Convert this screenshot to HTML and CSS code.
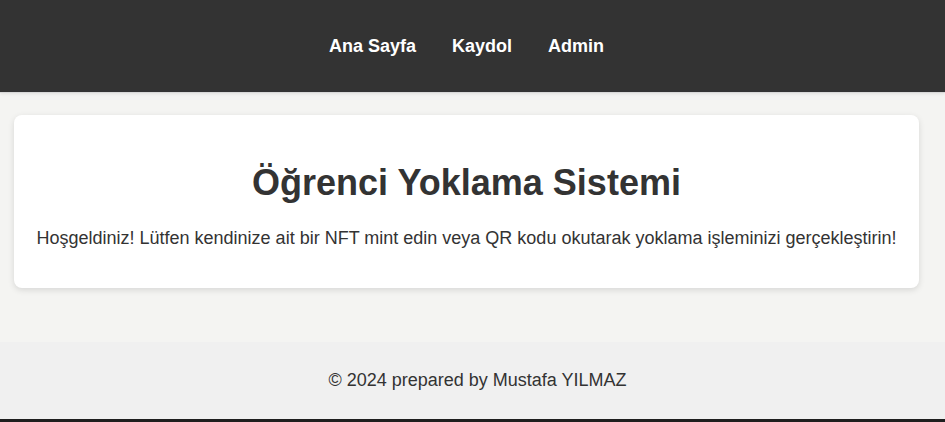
FILE: index.html
```html
<!DOCTYPE html>
<html lang="tr">
<head>
<meta charset="utf-8">
<title>Öğrenci Yoklama Sistemi</title>
<link rel="stylesheet" href="styles.css">
</head>
<body>
<header class="site-header">
  <nav class="nav">
    <a href="#" class="nav-link">Ana Sayfa</a>
    <a href="#" class="nav-link">Kaydol</a>
    <a href="#" class="nav-link">Admin</a>
  </nav>
</header>
<main class="main">
  <section class="card">
    <h1 class="title">Öğrenci Yoklama Sistemi</h1>
    <p class="lead">Hoşgeldiniz! Lütfen kendinize ait bir NFT mint edin veya QR kodu okutarak yoklama işleminizi gerçekleştirin!</p>
  </section>
</main>
<footer class="site-footer">
  <p class="footer-text">© 2024 prepared by Mustafa YILMAZ</p>
</footer>
<div class="edge"></div>
</body>
</html>
```

FILE: styles.css
```css
html, body {
  margin: 0;
  padding: 0;
}
body {
  font-family: "Liberation Sans", Arial, sans-serif;
  background: #f4f4f2;
  color: #333;
  height: 422px;
  display: flex;
  flex-direction: column;
  overflow: hidden;
}
.site-header {
  background: #333333;
  height: 92px;
  flex: none;
  display: flex;
  align-items: center;
  justify-content: center;
  padding-right: 12px;
  border-bottom: 1px solid #d8d8d8;
  box-shadow: 0 1px 3px rgba(0,0,0,0.08);
}
.nav {
  display: flex;
  gap: 36px;
}
.nav-link {
  color: #ffffff;
  text-decoration: none;
  font-weight: bold;
  font-size: 18px;
}
.main {
  padding: 22px 26px 0 14px;
  height: 249px;
  flex: none;
  box-sizing: border-box;
}
.card {
  background: #ffffff;
  border-radius: 8px;
  box-shadow: 0 2px 6px rgba(0,0,0,0.12);
  height: 173px;
  box-sizing: border-box;
  padding-top: 8px;
  display: flex;
  flex-direction: column;
  align-items: center;
  justify-content: center;
  text-align: center;
}
.title {
  margin: 0 0 24px;
  font-size: 36px;
  font-weight: bold;
  color: #333;
}
.lead {
  margin: 0;
  font-size: 18px;
  color: #333;
}
.site-footer {
  background: #f0f0f0;
  flex: 1;
  display: flex;
  align-items: center;
  justify-content: center;
  padding-left: 10px;
}
.footer-text {
  margin: 0;
  font-size: 18px;
  color: #333;
}
.edge {
  height: 3px;
  flex: none;
  background: #1e1e1e;
}
```
